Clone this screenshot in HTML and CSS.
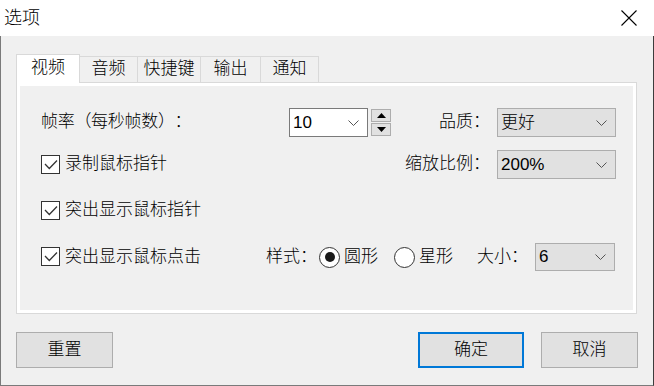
FILE: index.html
```html
<!DOCTYPE html>
<html lang="zh-CN">
<head>
<meta charset="utf-8">
<title>选项</title>
<link rel="stylesheet" href="styles.css">
</head>
<body>
<div class="window">
  <div class="titlebar">
    <span class="title">选项</span>
    <svg class="close" width="16" height="16" viewBox="0 0 16 16"><path d="M0.5 0.5 L15.5 15.5 M15.5 0.5 L0.5 15.5" stroke="#000" stroke-width="1.1" fill="none"/></svg>
  </div>
  <div class="client">
    <div class="tabs">
      <div class="tab active w64">视频</div>
      <div class="tab w59">音频</div>
      <div class="tab w64">快捷键</div>
      <div class="tab w61">输出</div>
      <div class="tab w59">通知</div>
    </div>
    <div class="panel">
      <div class="panel-inner">
        <div class="row r1">
          <span class="fps-label">帧率（每秒帧数）：</span>
          <div class="combo edit w79">
            <span class="val">10</span>
            <svg class="chev" width="11" height="6" viewBox="0 0 11 6"><polyline points="0.5,0.5 5.5,5.5 10.5,0.5" fill="none" stroke="#555" stroke-width="1"/></svg>
          </div>
          <div class="spin">
            <div class="spin-btn"><svg width="9" height="5" viewBox="0 0 9 5"><polygon points="4.5,0 9,5 0,5" fill="#000"/></svg></div>
            <div class="spin-btn"><svg width="9" height="5" viewBox="0 0 9 5"><polygon points="0,0 9,0 4.5,5" fill="#000"/></svg></div>
          </div>
          <span class="right-label">品质：</span>
          <div class="combo w119">
            <span class="val">更好</span>
            <svg class="chev" width="11" height="6" viewBox="0 0 11 6"><polyline points="0.5,0.5 5.5,5.5 10.5,0.5" fill="none" stroke="#555" stroke-width="1"/></svg>
          </div>
        </div>
        <div class="row r2">
          <span class="checkbox"><svg width="17" height="17" viewBox="0 0 17 17"><polyline points="3,8 7.3,12.5 15,4.5" fill="none" stroke="#333" stroke-width="1.3"/></svg></span>
          <span>录制鼠标指针</span>
          <span class="right-label">缩放比例：</span>
          <div class="combo w119">
            <span class="val">200%</span>
            <svg class="chev" width="11" height="6" viewBox="0 0 11 6"><polyline points="0.5,0.5 5.5,5.5 10.5,0.5" fill="none" stroke="#555" stroke-width="1"/></svg>
          </div>
        </div>
        <div class="row r3">
          <span class="checkbox"><svg width="17" height="17" viewBox="0 0 17 17"><polyline points="3,8 7.3,12.5 15,4.5" fill="none" stroke="#333" stroke-width="1.3"/></svg></span>
          <span>突出显示鼠标指针</span>
        </div>
        <div class="row r4">
          <div class="click-group">
            <span class="checkbox"><svg width="17" height="17" viewBox="0 0 17 17"><polyline points="3,8 7.3,12.5 15,4.5" fill="none" stroke="#333" stroke-width="1.3"/></svg></span>
            <span>突出显示鼠标点击</span>
          </div>
          <span class="style-label">样式：</span>
          <span class="radio checked"><span class="dot"></span></span>
          <span class="radio-text">圆形</span>
          <span class="radio"></span>
          <span class="radio-text">星形</span>
          <span class="size-label">大小：</span>
          <div class="combo w80 h28">
            <span class="val">6</span>
            <svg class="chev" width="11" height="6" viewBox="0 0 11 6"><polyline points="0.5,0.5 5.5,5.5 10.5,0.5" fill="none" stroke="#555" stroke-width="1"/></svg>
          </div>
        </div>
      </div>
    </div>
    <div class="footer">
      <div class="btn">重置</div>
      <div class="btn btn-ok">确定</div>
      <div class="btn">取消</div>
    </div>
  </div>
</div>
</body>
</html>
```

FILE: styles.css
```css
html, body {
  margin: 0;
  padding: 0;
}

body {
  width: 654px;
  height: 386px;
  overflow: hidden;
  background: #f0f0f0;
  color: #000;
  font-family: "Liberation Sans", "Noto Sans CJK SC", sans-serif;
  font-size: 17px;
  font-weight: 300;
  line-height: 1.2;
  text-spacing-trim: space-all;
  font-kerning: none;
}

.window {
  width: 654px;
  height: 386px;
  display: flex;
  flex-direction: column;
}

.titlebar {
  flex: none;
  height: 36px;
  background: #fff;
  display: flex;
  align-items: center;
  justify-content: space-between;
}

.title {
  font-size: 18px;
  padding-left: 4px;
  line-height: 1;
}

.close {
  margin-right: 17px;
}

.client {
  flex: 1;
  box-sizing: border-box;
  border-left: 1px solid #7a7a7a;
  border-right: 1px solid #3c3c3c;
  border-bottom: 1px solid #7a7a7a;
  padding: 0 15px;
  background: #f0f0f0;
}

.tabs {
  display: flex;
  align-items: flex-end;
  height: 28px;
  margin-top: 18px;
  position: relative;
  z-index: 1;
}

.tab {
  box-sizing: border-box;
  height: 26px;
  border: 1px solid #d9d9d9;
  border-bottom: none;
  background: #f0f0f0;
  margin-left: -1px;
  display: flex;
  align-items: center;
  justify-content: center;
  font-size: 17px;
}

.tab:first-child {
  margin-left: 0;
}

.tab.active {
  height: 29px;
  background: #fff;
  margin-bottom: -1px;
  padding-bottom: 2px;
}

.w64 { width: 64px; }
.w59 { width: 59px; }
.w61 { width: 61px; }

.panel {
  width: 621px;
  height: 232px;
  box-sizing: border-box;
  border: 1px solid #d9d9d9;
  background: #fff;
  padding: 3px;
}

.panel-inner {
  height: 100%;
  box-sizing: border-box;
  background: #f0f0f0;
  padding: 22px 17px 0 21px;
}

.row {
  display: flex;
  align-items: center;
  height: 29px;
}

.r2 { margin-top: 13px; }
.r3 { margin-top: 17px; }
.r4 { margin-top: 18px; height: 28px; }

.fps-label {
  flex: none;
  width: 248px;
  letter-spacing: -0.3px;
}

.right-label {
  margin-left: auto;
  margin-right: 7px;
}

.combo {
  flex: none;
  box-sizing: border-box;
  height: 29px;
  border: 1px solid #adadad;
  background: #e1e1e1;
  display: flex;
  align-items: center;
  justify-content: space-between;
  padding: 0 8px 0 3px;
}

.combo.edit {
  background: #fff;
  border-color: #7a7a7a;
}

.w79 { width: 79px; }
.w119 { width: 119px; }
.w80 { width: 80px; }
.h28 { height: 28px; }

.combo .val {
  padding-top: 1px;
}

.spin {
  flex: none;
  display: flex;
  flex-direction: column;
  gap: 1px;
  margin-left: 3px;
}

.spin-btn {
  box-sizing: border-box;
  width: 20px;
  height: 13px;
  border: 1px solid #adadad;
  background: #e1e1e1;
  display: flex;
  align-items: center;
  justify-content: center;
}

.checkbox {
  flex: none;
  box-sizing: border-box;
  width: 19px;
  height: 19px;
  border: 1px solid #333;
  background: #fff;
  display: flex;
  align-items: center;
  justify-content: center;
  margin-right: 5px;
}

.click-group {
  flex: none;
  width: 225px;
  display: flex;
  align-items: center;
}

.style-label {
  margin-right: 2px;
}

.radio {
  flex: none;
  box-sizing: border-box;
  width: 21px;
  height: 21px;
  border: 1px solid #333;
  border-radius: 50%;
  background: #fff;
  display: flex;
  align-items: center;
  justify-content: center;
  margin-right: 4px;
}

.radio .dot {
  width: 10px;
  height: 10px;
  border-radius: 50%;
  background: #1a1a1a;
}

.radio-text {
  margin-right: 16px;
}

.radio-text + .size-label {
  margin-left: 8px;
}

.size-label {
  margin-right: 7px;
}

.footer {
  display: flex;
  margin-top: 18px;
}

.btn {
  box-sizing: border-box;
  width: 97px;
  height: 36px;
  border: 1px solid #adadad;
  background: #e1e1e1;
  display: flex;
  align-items: center;
  justify-content: center;
}

.btn-ok {
  width: 106px;
  border: 2px solid #0078d7;
  margin-left: auto;
  margin-right: 17px;
}
```
